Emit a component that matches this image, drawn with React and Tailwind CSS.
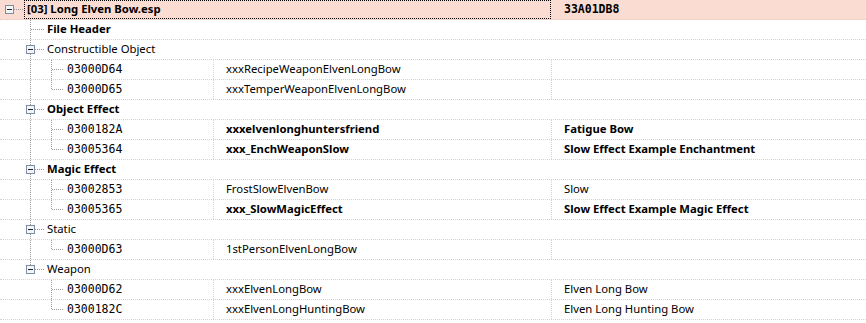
const rows = [
  { level: 0, label: "[03] Long Elven Bow.esp", bold: true, box: true, header: true, c3: "33A01DB8" },
  { level: 1, label: "File Header", bold: true },
  { level: 1, label: "Constructible Object", box: true },
  { level: 2, id: "03000D64", c2: "xxxRecipeWeaponElvenLongBow" },
  { level: 2, id: "03000D65", c2: "xxxTemperWeaponElvenLongBow", last: true },
  { level: 1, label: "Object Effect", bold: true, box: true },
  { level: 2, id: "0300182A", c2: "xxxelvenlonghuntersfriend", c3: "Fatigue Bow", bold: true },
  { level: 2, id: "03005364", c2: "xxx_EnchWeaponSlow", c3: "Slow Effect Example Enchantment", bold: true, last: true },
  { level: 1, label: "Magic Effect", bold: true, box: true },
  { level: 2, id: "03002853", c2: "FrostSlowElvenBow", c3: "Slow" },
  { level: 2, id: "03005365", c2: "xxx_SlowMagicEffect", c3: "Slow Effect Example Magic Effect", bold: true, last: true },
  { level: 1, label: "Static", box: true },
  { level: 2, id: "03000D63", c2: "1stPersonElvenLongBow", last: true },
  { level: 1, label: "Weapon", box: true, last: true },
  { level: 2, id: "03000D62", c2: "xxxElvenLongBow", c3: "Elven Long Bow", under: "last" },
  { level: 2, id: "0300182C", c2: "xxxElvenLongHuntingBow", c3: "Elven Long Hunting Bow", last: true, under: "last" },
];

const dot = { stroke: "#9a9a9a", strokeDasharray: "1 1", strokeWidth: 1 };

function ExpandBox({ x }) {
  return (
    <g>
      <rect x={x + 0.5} y={5.5} width={8} height={8} fill="#f2f4f7" stroke="#7d8ea3" />
      <line x1={x + 2} y1={9.5} x2={x + 7} y2={9.5} stroke="#222" />
    </g>
  );
}

function TreeLines({ row }) {
  const w = 25 + row.level * 20;
  return (
    <svg width={w} height={19} className="shrink-0">
      {row.level === 0 && (
        <>
          <line x1={14} y1={9.5} x2={24} y2={9.5} {...dot} />
          <ExpandBox x={5} />
        </>
      )}
      {row.level === 1 && (
        <>
          <line x1={30.5} y1={0} x2={30.5} y2={row.last ? 10 : 19} {...dot} />
          <line x1={row.box ? 35 : 31} y1={9.5} x2={44} y2={9.5} {...dot} />
          {row.box && <ExpandBox x={26} />}
        </>
      )}
      {row.level === 2 && (
        <>
          {row.under !== "last" && <line x1={30.5} y1={0} x2={30.5} y2={19} {...dot} />}
          <line x1={51.5} y1={0} x2={51.5} y2={row.last ? 10 : 19} {...dot} />
          <line x1={52} y1={9.5} x2={64} y2={9.5} {...dot} />
        </>
      )}
    </svg>
  );
}

const sans = "font-['Noto_Sans',sans-serif] text-[11.3px]";
const mono = "font-['DejaVu_Sans_Mono',monospace] text-[11.5px]";

function Row({ row }) {
  if (row.header) {
    return (
      <div className="flex h-5 bg-[#fbdcd2] border-b border-dotted border-[#cfcfcf]">
        <div className="flex w-[551px] shrink-0 items-start">
          <TreeLines row={row} />
          <div className="flex-1 h-[19px] border border-dotted border-black -ml-[1px] pl-[2px] flex items-center">
            <span className={`${sans} font-bold`}>{row.label}</span>
          </div>
        </div>
        <div className={`pl-[13px] flex items-center h-[19px] ${mono} font-bold`}>{row.c3}</div>
      </div>
    );
  }
  if (!row.id) {
    return (
      <div className="flex h-5 border-b border-dotted border-[#d4d4d4]">
        <TreeLines row={row} />
        <div className={`pl-[2px] flex items-center h-[19px] ${sans} ${row.bold ? "font-bold" : ""}`}>{row.label}</div>
      </div>
    );
  }
  return (
    <div className="flex h-5 border-b border-dotted border-[#d4d4d4]">
      <div className="flex w-[213px] shrink-0">
        <TreeLines row={row} />
        <div className={`pl-[2px] flex items-center h-[19px] ${mono}`}>{row.id}</div>
      </div>
      <div className={`w-[338px] shrink-0 border-l border-dotted border-[#d4d4d4] pl-[12px] flex items-center h-[19px] ${sans} ${row.bold ? "font-bold" : ""}`}>
        {row.c2}
      </div>
      <div className={`flex-1 border-l border-dotted border-[#d4d4d4] pl-[12px] flex items-center h-[19px] ${sans} ${row.bold ? "font-bold" : ""}`}>
        {row.c3}
      </div>
    </div>
  );
}

export default function App() {
  return (
    <div className="w-[866px] h-[323px] bg-white text-black overflow-hidden">
      {rows.map((r, i) => (
        <Row key={i} row={r} />
      ))}
    </div>
  );
}
